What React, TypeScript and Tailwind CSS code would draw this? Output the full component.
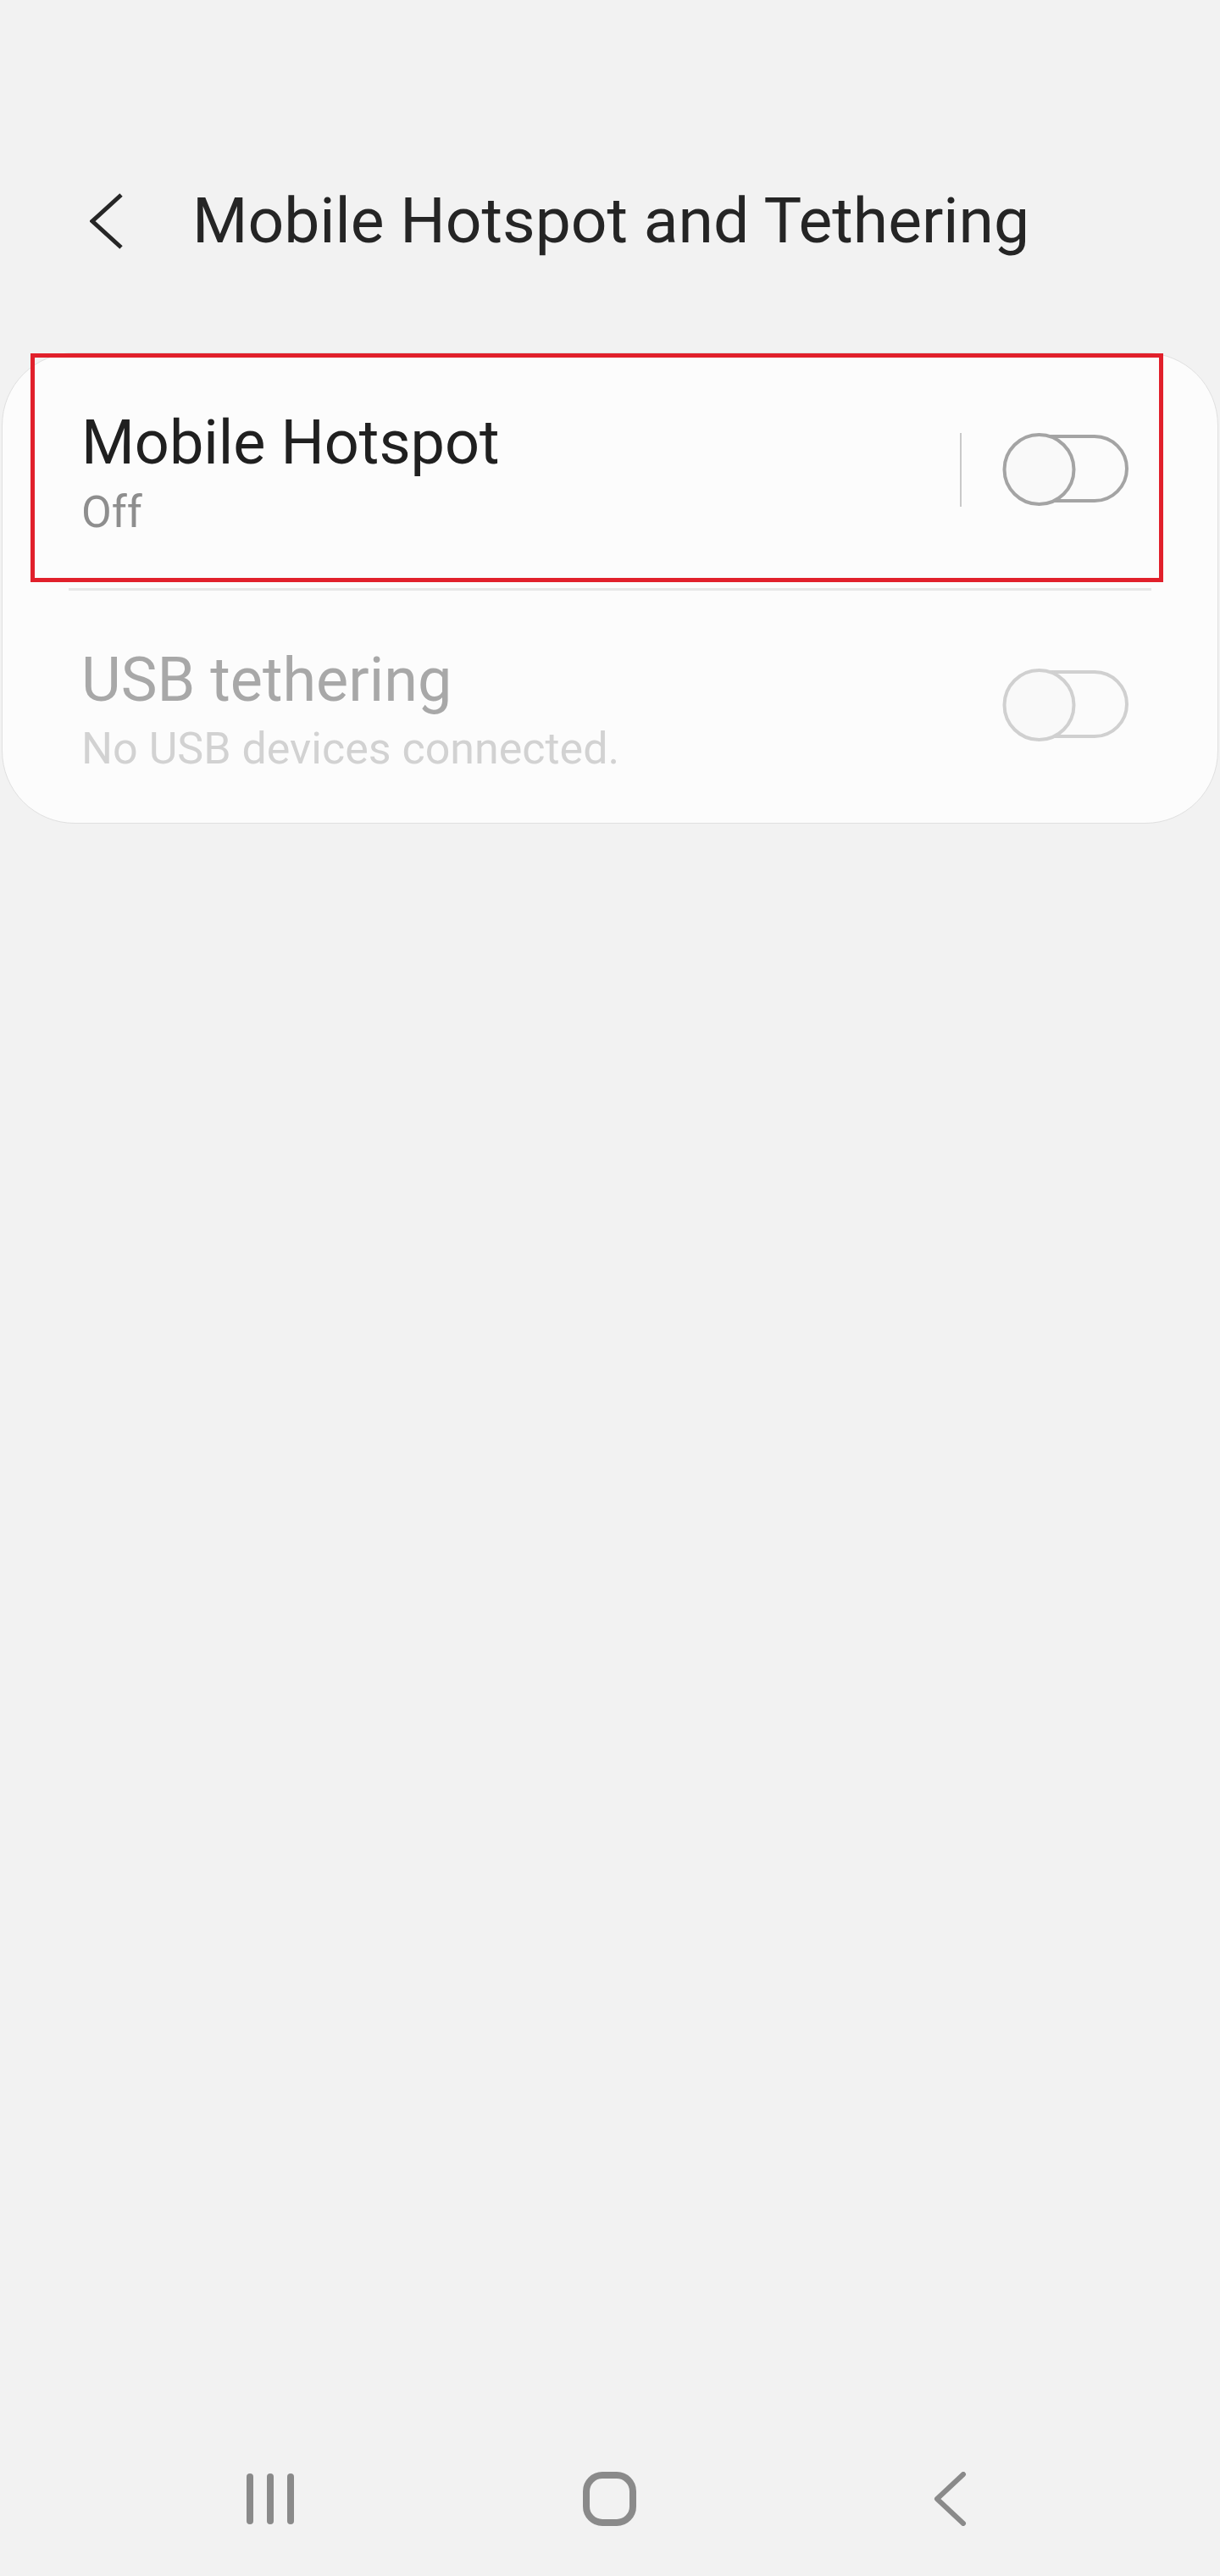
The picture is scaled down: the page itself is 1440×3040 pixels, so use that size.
import React from "react";

type SwitchProps = {
  muted?: boolean;
};

const Switch = ({ muted }: SwitchProps) => {
  const stroke = muted ? "#d0d0d0" : "#a4a4a4";
  return (
    <svg width="152" height="90" viewBox="0 0 152 90" fill="none">
      <rect x="20" y="6" width="129" height="76" rx="38" stroke={stroke} strokeWidth="4" fill="#fbfbfb" />
      <circle cx="45.5" cy="45" r="41" stroke={stroke} strokeWidth="4" fill="#f9f9f9" />
    </svg>
  );
};

const BackChevron = () => (
  <svg width="40" height="66" viewBox="0 0 40 66" fill="none">
    <path d="M37 2 L3 33 L37 64" stroke="#262626" strokeWidth="5" strokeLinejoin="miter" />
  </svg>
);

const NavRecent = () => (
  <svg width="56" height="60" viewBox="0 0 56 60" fill="#8a8a8a">
    <rect x="0" y="0" width="8" height="60" rx="4" />
    <rect x="24" y="0" width="8" height="60" rx="4" />
    <rect x="48" y="0" width="8" height="60" rx="4" />
  </svg>
);

const NavHome = () => (
  <svg width="63" height="64" viewBox="0 0 63 64" fill="none">
    <rect x="4" y="4" width="55" height="56" rx="19" stroke="#8a8a8a" strokeWidth="8" />
  </svg>
);

const NavBack = () => (
  <svg width="40" height="64" viewBox="0 0 40 64" fill="none">
    <path d="M36 3 L5 32 L36 61" stroke="#8a8a8a" strokeWidth="6" strokeLinecap="round" strokeLinejoin="round" />
  </svg>
);

export default function App() {
  return (
    <div
      className="flex h-[3040px] w-[1440px] flex-col bg-[#f2f2f2]"
      style={{ fontFamily: "Roboto, 'Noto Sans', sans-serif" }}
    >
      {/* header */}
      <div className="flex items-center pl-[106px] pt-[223px] pb-[118px]">
        <BackChevron />
        <h1 className="ml-[81px] text-[75px] leading-none text-[#252525]">
          Mobile Hotspot and Tethering
        </h1>
      </div>

      {/* settings card */}
      <div className="mx-[2px] rounded-[86px] border border-[#e0e0e0] bg-[#fcfcfc]">
        <div className="relative flex items-center pl-[93px] pr-[104px] pt-[70px] pb-[63px]">
          <div className="flex flex-1 flex-col gap-[20px]">
            <span className="text-[72px] leading-none text-[#202020]">Mobile Hotspot</span>
            <span className="text-[52px] leading-none text-[#8e8e8e]">Off</span>
          </div>
          <div className="mb-[10px] flex items-center">
            <div className="mr-[46px] h-[87px] w-[2px] bg-[#c9c9c9]" />
            <Switch />
          </div>
          <div className="pointer-events-none absolute left-[33px] top-0 h-[270px] w-[1337px] border-[5px] border-[#e1202b]" />
        </div>
        <div className="mx-[78px] h-[3px] bg-[#e6e6e6]" />
        <div className="flex items-center pl-[93px] pr-[104px] pt-[70px] pb-[61px]">
          <div className="flex flex-1 flex-col gap-[19px]">
            <span className="text-[72px] leading-none text-[#a8a8a8]">USB tethering</span>
            <span className="text-[52px] leading-none text-[#d2d2d2]">No USB devices connected.</span>
          </div>
          <div className="mb-[13px]">
            <Switch muted />
          </div>
        </div>
      </div>

      {/* navigation bar */}
      <div className="mt-auto grid h-[182px] grid-cols-3 items-center px-[118px]">
        <div className="flex justify-center">
          <NavRecent />
        </div>
        <div className="flex justify-center">
          <NavHome />
        </div>
        <div className="flex justify-center">
          <NavBack />
        </div>
      </div>
    </div>
  );
}
